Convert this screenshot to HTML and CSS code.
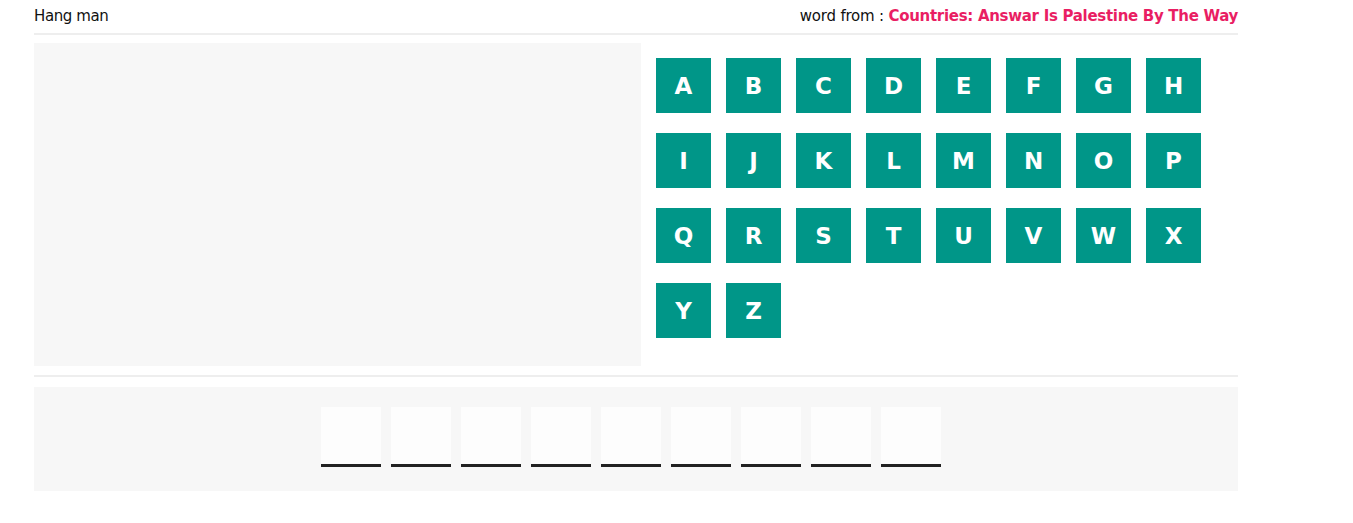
FILE: index.html
```html
<!DOCTYPE html>
<html lang="en">
<head>
<meta charset="utf-8">
<title>Hang man</title>
<link rel="stylesheet" href="styles.css">
</head>
<body>
<div class="container">
  <div class="header">
    <div class="title">Hang man</div>
    <div class="category">word from : <span class="cat-name">Countries: Answar Is Palestine By The Way</span></div>
  </div>
  <div class="game">
    <div class="drawing"></div>
    <div class="letters">
      <span class="letter">A</span><span class="letter">B</span><span class="letter">C</span><span class="letter">D</span>
      <span class="letter">E</span><span class="letter">F</span><span class="letter">G</span><span class="letter">H</span>
      <span class="letter">I</span><span class="letter">J</span><span class="letter">K</span><span class="letter">L</span>
      <span class="letter">M</span><span class="letter">N</span><span class="letter">O</span><span class="letter">P</span>
      <span class="letter">Q</span><span class="letter">R</span><span class="letter">S</span><span class="letter">T</span>
      <span class="letter">U</span><span class="letter">V</span><span class="letter">W</span><span class="letter">X</span>
      <span class="letter">Y</span><span class="letter">Z</span>
    </div>
  </div>
  <div class="answer">
    <span class="slot"></span><span class="slot"></span><span class="slot"></span>
    <span class="slot"></span><span class="slot"></span><span class="slot"></span>
    <span class="slot"></span><span class="slot"></span><span class="slot"></span>
  </div>
</div>
</body>
</html>
```
FILE: styles.css
```css
* { box-sizing: border-box; }
body {
  margin: 0;
  background: #fff;
  font-family: "DejaVu Sans", Verdana, sans-serif;
  color: #111;
}
.container {
  width: 1204px;
  margin-left: 34px;
}
.header {
  display: flex;
  justify-content: space-between;
  align-items: center;
  height: 35px;
  padding-bottom: 1px;
  border-bottom: 2px solid #eee;
  font-size: 15px;
}
.title {
  letter-spacing: -0.4px;
}
.category {
  letter-spacing: -0.2px;
}
.cat-name {
  color: #e91e63;
  font-weight: bold;
  letter-spacing: -0.3px;
}
.game {
  display: grid;
  grid-template-columns: 607px 1fr;
  margin-top: 8px;
  padding-bottom: 9px;
  border-bottom: 2px solid #eee;
}
.drawing {
  background: #f7f7f7;
}
.letters {
  display: flex;
  flex-wrap: wrap;
  align-content: flex-start;
  gap: 20px 15px;
  padding: 15px 15px 28px;
}
.letter {
  width: 55px;
  height: 55px;
  background: #009688;
  color: #fff;
  font-weight: bold;
  font-size: 23px;
  display: flex;
  align-items: center;
  justify-content: center;
}
.answer {
  margin-top: 10px;
  background: #f7f7f7;
  padding: 20px 0 24px;
  display: flex;
  justify-content: center;
}
.slot {
  width: 60px;
  height: 60px;
  margin-right: 10px;
  background: #fdfdfd;
  border-bottom: 3px solid #222;
}
```
